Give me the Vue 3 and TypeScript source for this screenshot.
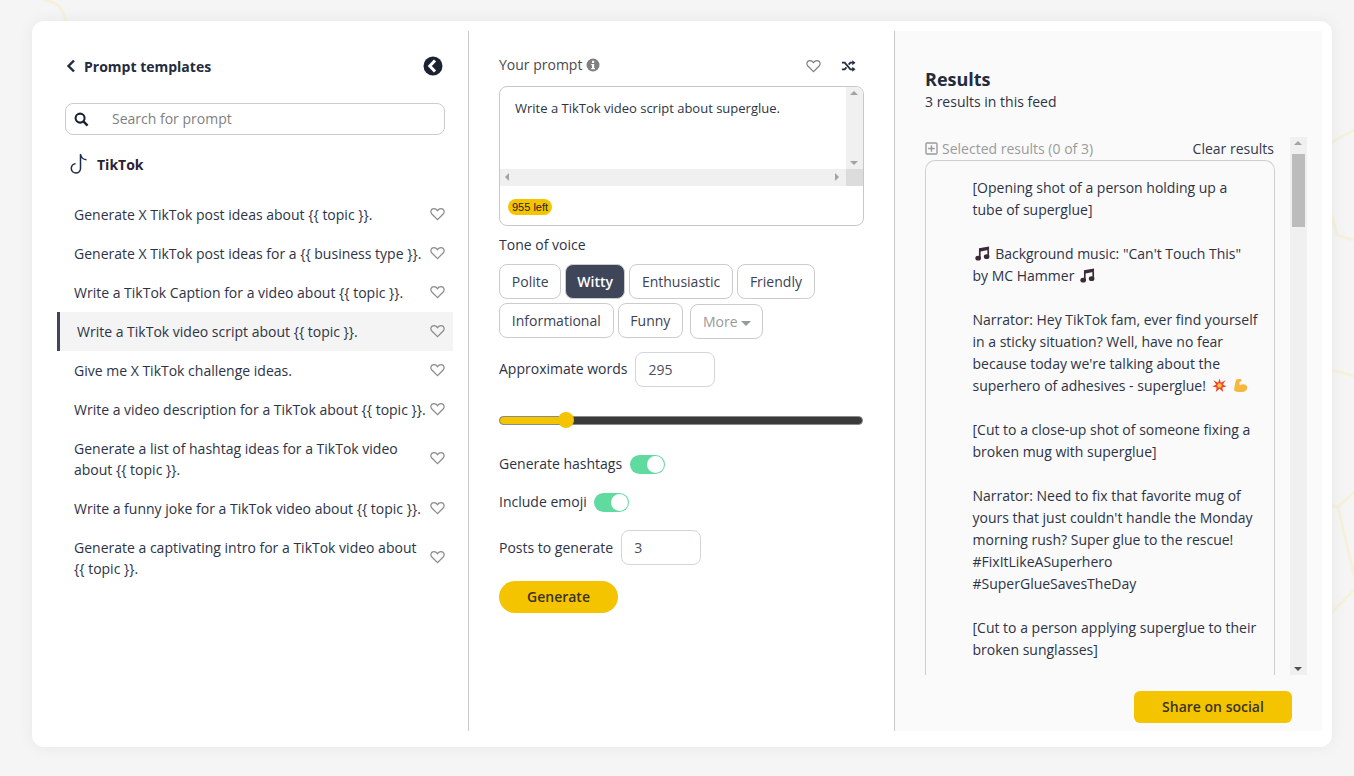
<template>
  <div class="page">
    <svg class="bg-lines" viewBox="0 0 1354 776" width="1354" height="776" aria-hidden="true">
      <g fill="none" stroke="#f6f1dc" stroke-width="3">
        <path d="M44 0 C56 2 62 6 66 21" />
        <path d="M1332 142 L1354 130" />
        <path d="M1332 215 L1337 235 L1354 240" />
        <path d="M1332 370 L1354 376" />
        <path d="M1354 492 L1338 507 L1332 505" />
        <path d="M1338 507 L1354 575" />
        <path d="M1332 612 L1354 590" />
      </g>
    </svg>

    <main class="card">
      <section class="col-left">
        <header class="tpl-head">
          <svg class="chev" viewBox="0 0 10 14" width="10" height="14"><path d="M8 1.5 L2.5 7 L8 12.5" fill="none" stroke="#232b3e" stroke-width="2.4" /></svg>
          <span class="tpl-title">Prompt templates</span>
          <svg class="collapse" viewBox="0 0 20 20" width="20" height="20"><circle cx="10" cy="10" r="9.5" fill="#1d2233" /><path d="M12 4.5 L6.8 10 L12 15.5" fill="none" stroke="#fff" stroke-width="3" /></svg>
        </header>

        <div class="search">
          <svg viewBox="0 0 16 16" width="15" height="15"><circle cx="6.5" cy="6.5" r="4.8" fill="none" stroke="#1d2233" stroke-width="2.2" /><path d="M10 10 L14.5 14.5" stroke="#1d2233" stroke-width="2.6" /></svg>
          <span class="search-ph">Search for prompt</span>
        </div>

        <div class="cat">
          <svg viewBox="0 0 20 22" width="20" height="22"><path d="M10.5 1 V15.5 A4.6 4.6 0 1 1 5.5 10.8 M10.5 1 C11 4.5 13.5 6.5 16.5 6.8" fill="none" stroke="#1d2b4d" stroke-width="1.5" /></svg>
          <span>TikTok</span>
        </div>

        <ul class="tpl-list">
          <li v-for="t in templates" :key="t" class="tpl" :class="{ active: t === activeTemplate }">
            <span class="tpl-text">{{ t }}</span>
            <svg class="heart" viewBox="0 0 16 14" width="15" height="14"><path :d="heartPath" fill="none" stroke="#8a8a8a" stroke-width="1.3" /></svg>
          </li>
        </ul>
      </section>

      <section class="col-mid">
        <div class="prompt-head">
          <span class="label">Your prompt</span>
          <svg class="info" viewBox="0 0 14 14" width="14" height="14"><circle cx="7" cy="7" r="6.5" fill="#808080" /><rect x="6" y="2.8" width="2.2" height="2.2" fill="#fff" /><path d="M5.2 6 H8.2 V10 H9 V11.2 H5.2 V10 H6 V7.2 H5.2 Z" fill="#fff" /></svg>
          <span class="spacer"></span>
          <svg class="heart-lg" viewBox="0 0 16 14" width="15" height="14"><path :d="heartPath" fill="none" stroke="#7d7d7d" stroke-width="1.2" /></svg>
          <svg class="shuffle" viewBox="0 0 16 14" width="15" height="14">
            <path d="M1 3.5 H4 L10 10.5 H12.5 M1 10.5 H4 L5.8 8.4 M8.2 5.6 L10 3.5 H12.5" fill="none" stroke="#232b3e" stroke-width="1.9" />
            <path d="M12 0.8 L15.5 3.5 L12 6.2 Z M12 7.8 L15.5 10.5 L12 13.2 Z" fill="#232b3e" />
          </svg>
        </div>

        <div class="prompt-box">
          <div class="prompt-area">
            <div class="prompt-text">Write a TikTok video script about superglue.</div>
            <div class="sb-v">
              <i class="tri up"></i>
              <i class="tri down"></i>
            </div>
          </div>
          <div class="sb-h">
            <i class="tri left"></i>
            <i class="tri right"></i>
            <b class="sb-corner"></b>
          </div>
          <div class="prompt-foot"><span class="left-badge">955 left</span></div>
        </div>

        <div class="label tone-label">Tone of voice</div>
        <div class="tones">
          <button v-for="t in tones" :key="t" class="tone" :class="{ on: t === 'Witty' }">{{ t }}</button>
          <button class="tone more">More<i class="caret"></i></button>
        </div>

        <div class="row words">
          <span class="label nudge">Approximate words</span>
          <div class="num">295</div>
        </div>

        <div class="slider">
          <div class="slider-fill" :style="{ width: sliderPct + '%' }"></div>
          <div class="slider-knob" :style="{ left: sliderPct + '%' }"></div>
        </div>

        <div class="row switch-row first">
          <span class="label">Generate hashtags</span>
          <span class="switch"><i></i></span>
        </div>
        <div class="row switch-row tight">
          <span class="label">Include emoji</span>
          <span class="switch"><i></i></span>
        </div>

        <div class="row posts">
          <span class="label">Posts to generate</span>
          <div class="num">3</div>
        </div>

        <button class="generate">Generate</button>
      </section>

      <section class="col-right">
        <h2 class="res-title">Results</h2>
        <div class="res-sub">3 results in this feed</div>

        <div class="res-wrap">
          <div class="res-main">
            <div class="res-bar">
              <svg viewBox="0 0 13 13" width="13" height="13"><rect x="1" y="1" width="11" height="11" rx="1" fill="none" stroke="#9a9a9a" stroke-width="1.4" /><path d="M6.5 3.2 V9.8 M3.2 6.5 H9.8" stroke="#9a9a9a" stroke-width="1.4" /></svg>
              <span class="selected">Selected results (0 of 3)</span>
              <span class="spacer"></span>
              <span class="clear">Clear results</span>
            </div>
            <div class="res-box">
              <p v-for="(para, i) in paragraphs" :key="i" class="para">
                <template v-for="(part, j) in para" :key="j">
                  <svg v-if="part === '#note'" class="emo note" viewBox="0 0 16 16" width="15" height="15"><path d="M4.2 2.5 L15 0.5 V4 L6 5.8 V13 H4.2 Z M13.2 3 H15 V11 H13.2 Z" fill="#3d2a38" /><ellipse cx="3.4" cy="13" rx="3" ry="2.5" fill="#3d2a38" /><ellipse cx="12.4" cy="11.4" rx="3" ry="2.5" fill="#3d2a38" /></svg>
                  <svg v-else-if="part === '#boom'" class="emo" viewBox="0 0 16 16" width="15" height="15"><path d="M8 0.5 L9.5 5 L14.5 2.5 L11.5 7 L15.5 9 L11 10 L12 15 L8 11.5 L4 15 L5 10 L0.5 9 L4.5 7 L1.5 2.5 L6.5 5 Z" fill="#e8452c" /><circle cx="8" cy="8" r="2.4" fill="#f8c33a" /></svg>
                  <svg v-else-if="part === '#arm'" class="emo arm" viewBox="0 0 16 16" width="15" height="15"><path d="M3.5 1.5 L8 0.8 L9.5 3 L6.8 4.6 L7.2 8 C9.5 6 13.5 6.3 15 9 C15.8 12.5 13 15 8.5 15 C5 15 2.5 14.5 1.2 13 C1.5 9 2.2 5 3.5 1.5 Z" fill="#f6b73c" /></svg>
                  <span v-else>{{ part }}</span>
                </template>
              </p>
            </div>
          </div>
          <div class="res-sb">
            <i class="tri up dark"></i>
            <b class="thumb"></b>
            <i class="tri down dark"></i>
          </div>
        </div>

        <div class="share-row"><button class="share">Share on social</button></div>
      </section>
    </main>
  </div>
</template>

<script setup lang="ts">
const heartPath = 'M8 13 L2 7 C0 4.8 1 1.2 4.2 1.2 C6 1.2 7.2 2.2 8 3.4 C8.8 2.2 10 1.2 11.8 1.2 C15 1.2 16 4.8 14 7 Z'

const templates: string[] = [
  'Generate X TikTok post ideas about {{ topic }}.',
  'Generate X TikTok post ideas for a {{ business type }}.',
  'Write a TikTok Caption for a video about {{ topic }}.',
  'Write a TikTok video script about {{ topic }}.',
  'Give me X TikTok challenge ideas.',
  'Write a video description for a TikTok about {{ topic }}.',
  'Generate a list of hashtag ideas for a TikTok video about {{ topic }}.',
  'Write a funny joke for a TikTok video about {{ topic }}.',
  'Generate a captivating intro for a TikTok video about {{ topic }}.',
]
const activeTemplate = templates[3]

const tones = ['Polite', 'Witty', 'Enthusiastic', 'Friendly', 'Informational', 'Funny']
const sliderPct = 18.2

const paragraphs: string[][] = [
  ['[Opening shot of a person holding up a tube of superglue]'],
  ['#note', ' Background music: "Can\'t Touch This" by MC Hammer ', '#note'],
  ["Narrator: Hey TikTok fam, ever find yourself in a sticky situation? Well, have no fear because today we're talking about the superhero of adhesives - superglue! ", '#boom', '#arm'],
  ['[Cut to a close-up shot of someone fixing a broken mug with superglue]'],
  ["Narrator: Need to fix that favorite mug of yours that just couldn't handle the Monday morning rush? Super glue to the rescue! #FixItLikeASuperhero #SuperGlueSavesTheDay"],
  ['[Cut to a person applying superglue to their broken sunglasses]'],
]
</script>

<style>
html, body {
  margin: 0;
  background: #f5f5f5;
  overflow: hidden;
}
</style>

<style scoped>
.page {
  position: relative;
  height: 776px;
  padding: 21px 22px 29px 32px;
  box-sizing: border-box;
  font-family: "Open Sans", "Noto Sans", sans-serif;
  font-size: 14px;
  color: #2d3346;
}
.bg-lines {
  position: absolute;
  left: 0;
  top: 0;
}
.card {
  position: relative;
  height: 100%;
  display: flex;
  background: #fff;
  border-radius: 12px;
  box-shadow: 0 0 16px rgba(0, 0, 0, 0.06);
  padding: 10px 10px 16px 0;
  box-sizing: border-box;
}
.spacer { flex: 1; }
button { font-family: inherit; cursor: pointer; }

.col-left {
  width: 437px;
  flex: none;
  box-sizing: border-box;
  border-right: 1px solid #c8c8c8;
  padding: 25px 15px 0 25px;
}
.tpl-head {
  display: flex;
  align-items: center;
  height: 20px;
  padding: 0 0 0 9px;
}
.tpl-title {
  margin-left: 8px;
  font-weight: 700;
  font-size: 14px;
  flex: 1;
  color: #232b3e;
}
.collapse { margin-right: 10px; }
.search {
  margin: 27px 8px 0 8px;
  height: 32px;
  box-sizing: border-box;
  border: 1px solid #ccc;
  border-radius: 8px;
  display: flex;
  align-items: center;
  padding-left: 8px;
}
.search-ph {
  margin-left: 23px;
  margin-top: -2px;
  color: #7f7f7f;
}
.cat {
  display: flex;
  align-items: center;
  gap: 7px;
  margin: 17px 0 0 13px;
  height: 24px;
  font-weight: 700;
  color: #2b2333;
}
.tpl-list {
  list-style: none;
  margin: 19px 0 0;
  padding: 0;
}
.tpl {
  display: flex;
  align-items: center;
  padding: 9px 8px 9px 17px;
  box-sizing: border-box;
  line-height: 21px;
}
.tpl-text { flex: 1; }
.tpl.active {
  background: #f4f4f4;
  border-left: 3px solid #3f4659;
  padding-left: 17px;
}
.heart { flex: none; margin-top: -2px; }

.col-mid {
  width: 426px;
  flex: none;
  box-sizing: border-box;
  border-right: 1px solid #c8c8c8;
  padding: 24px 30px 0 30px;
}
.prompt-head {
  display: flex;
  align-items: center;
  height: 20px;
  color: #4a4a4a;
}
.info { margin-left: 4px; }
.heart-lg { margin-right: 20px; margin-top: 2px; }
.shuffle { margin-right: 8px; margin-top: 2px; }
.label { line-height: 20px; }
.nudge { margin-top: -2px; }
.prompt-box {
  margin-top: 11px;
  height: 140px;
  border: 1px solid #c8c8c8;
  border-radius: 8px;
  overflow: hidden;
  box-sizing: border-box;
}
.prompt-area {
  display: flex;
  height: 82px;
}
.prompt-text {
  flex: 1;
  padding: 11px 15px;
  font-size: 13px;
  line-height: 20px;
}
.sb-v {
  width: 17px;
  background: #f0f0f0;
  position: relative;
}
.sb-h {
  height: 17px;
  background: #f0f0f0;
  position: relative;
}
.sb-corner {
  position: absolute;
  right: 0;
  top: 0;
  width: 17px;
  height: 17px;
  background: #dcdcdc;
}
.tri {
  position: absolute;
  width: 0;
  height: 0;
  border: 4px solid transparent;
}
.tri.up { top: 4px; left: 4px; border-top: 0; border-bottom: 4px solid #a3a3a3; }
.tri.down { bottom: 4px; left: 4px; border-bottom: 0; border-top: 4px solid #a3a3a3; }
.tri.left { left: 5px; top: 4px; border-left: 0; border-right: 4px solid #a3a3a3; }
.tri.right { right: 24px; top: 4px; border-right: 0; border-left: 4px solid #a3a3a3; }
.tri.down.dark { border-top-color: #505050; }
.prompt-foot { padding: 13px 8px 0; line-height: 16px; }
.left-badge {
  display: block;
  width: fit-content;
  background: #f5c400;
  border-radius: 8px;
  font-family: "Liberation Sans", sans-serif;
  font-size: 11px;
  line-height: 16px;
  padding: 0 4px;
  color: #222;
}
.tone-label { margin-top: 9px; }
.tones {
  display: flex;
  flex-wrap: wrap;
  gap: 4px;
  margin-top: 9px;
  width: 340px;
}
.tone {
  height: 35px;
  padding: 0 11.8px;
  border: 1px solid #ccc;
  border-radius: 8px;
  background: #fff;
  font-size: 14px;
  color: #3b4254;
}
.tone.on {
  background: #3f4659;
  color: #fff;
  font-weight: 600;
  padding: 0 11px;
}
.tone.more {
  margin-left: 3px;
  margin-top: 1px;
  color: #9a9a9a;
}
.caret {
  display: inline-block;
  margin-left: 3px;
  vertical-align: middle;
  border: 5px solid transparent;
  border-top: 5px solid #9a9a9a;
  border-bottom: 0;
}
.row {
  display: flex;
  align-items: center;
}
.words { margin-top: 13px; gap: 8px; }
.num {
  width: 80px;
  height: 35px;
  box-sizing: border-box;
  border: 1px solid #d3d5dc;
  border-radius: 8px;
  padding: 0 12px;
  line-height: 33px;
  color: #4a5060;
}
.slider {
  position: relative;
  margin: 29px 1px 0 0;
  height: 9px;
  border-radius: 5px;
  background: #3a3a3a;
  border: 1px solid #8a8a8a;
  box-sizing: border-box;
}
.slider-fill {
  height: 100%;
  border-radius: 5px;
  background: #f5c400;
}
.slider-knob {
  position: absolute;
  top: -5px;
  width: 16px;
  height: 16px;
  margin-left: -8px;
  border-radius: 50%;
  background: #f5c400;
}
.switch-row { gap: 8px; height: 20px; margin-top: 18px; }
.switch-row.first { margin-top: 29px; }
.switch-row.tight { gap: 7px; }
.switch {
  position: relative;
  width: 35px;
  height: 19px;
  border-radius: 10px;
  background: #5fdba0;
}
.switch i {
  position: absolute;
  right: 1px;
  top: 1px;
  width: 17px;
  height: 17px;
  border-radius: 50%;
  background: #fff;
}
.posts { margin-top: 18px; gap: 8px; }
.generate {
  display: block;
  margin-top: 16px;
  width: 119px;
  height: 32px;
  padding: 0 0 2px;
  border: 0;
  border-radius: 16px;
  background: #f5c400;
  font-size: 14px;
  font-weight: 600;
  color: #3a3420;
}

.col-right {
  flex: 1;
  min-width: 0;
  background: #fafafa;
  padding: 36px 15px 0 30px;
  box-sizing: border-box;
  display: flex;
  flex-direction: column;
}
.res-title {
  margin: 0;
  font-size: 18px;
  line-height: 24px;
  font-weight: 700;
  color: #232b3e;
}
.res-sub { line-height: 20px; margin-top: 1px; }
.res-wrap {
  display: flex;
  gap: 15px;
  margin-top: 25px;
  height: 538px;
  overflow: hidden;
}
.res-main {
  width: 350px;
  flex: none;
  min-height: 0;
  display: flex;
  flex-direction: column;
}
.res-bar {
  display: flex;
  align-items: center;
  height: 23px;
  flex: none;
  gap: 4px;
}
.selected { color: #9a9a9a; }
.clear { color: #33384a; margin-right: 1px; }
.res-box {
  flex: 1;
  border: 1px solid #cfcfcf;
  border-bottom: 0;
  border-radius: 10px 10px 0 0;
  padding: 16px 15px 0 46.5px;
  overflow: hidden;
}
.para {
  margin: 0 0 22px;
  line-height: 22px;
}
.emo {
  vertical-align: -2px;
  margin: 0 2px;
}
.emo.arm { margin-left: 4px; }
.res-sb {
  position: relative;
  width: 17px;
  background: #f0f0f0;
  flex: none;
}
.thumb {
  position: absolute;
  left: 2px;
  top: 17px;
  width: 13px;
  height: 73px;
  background: #bcbcbc;
}
.res-sb .tri { left: 4px; }
.share-row {
  display: flex;
  justify-content: flex-end;
  margin-top: 16px;
  padding-right: 15px;
}
.share {
  width: 158px;
  height: 32px;
  padding: 0 0 2px;
  border: 0;
  border-radius: 6px;
  background: #f5c400;
  font-size: 14px;
  font-weight: 600;
  color: #3a3420;
}
</style>
